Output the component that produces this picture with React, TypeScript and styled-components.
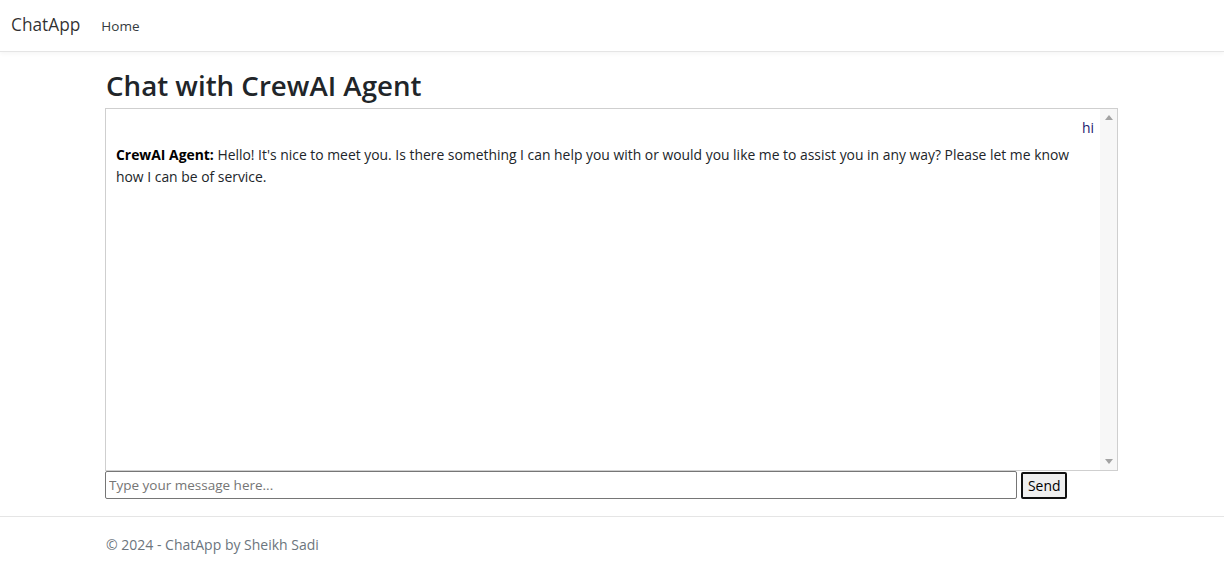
import React from "react";
import styled, { createGlobalStyle } from "styled-components";

const Global = createGlobalStyle`
  html, body { margin: 0; padding: 0; background: #fff; }
  body {
    font-family: "Open Sans", "Noto Sans", "Liberation Sans", sans-serif;
    color: #212529;
    font-size: 14px;
  }
  * { box-sizing: border-box; }
`;

const Page = styled.div`
  display: flex;
  flex-direction: column;
  min-height: 571px;
`;

const NavBar = styled.header`
  height: 52px;
  display: flex;
  align-items: center;
  gap: 21px;
  padding: 0 11px;
  border-bottom: 1px solid #e5e5e5;
  box-shadow: 0 2px 4px rgba(0, 0, 0, 0.04);
`;

const Brand = styled.a`
  font-size: 17.3px;
  color: rgba(0, 0, 0, 0.82);
  text-decoration: none;
  padding-bottom: 2px;
`;

const NavLink = styled.a`
  font-size: 13.5px;
  color: #343a40;
  text-decoration: none;
`;

const Main = styled.main`
  padding: 14px 106px 0 105px;
  flex: 0 0 auto;
`;

const Title = styled.h2`
  margin: 0 0 4px 1px;
  font-size: 27.7px;
  font-weight: 600;
  line-height: 38px;
  color: #212529;
`;

const ChatBox = styled.div`
  display: flex;
  height: 363px;
  border: 1px solid #cfcfcf;
`;

const Messages = styled.div`
  flex: 1;
  padding: 8px 6px 0 10px;
  display: flex;
  flex-direction: column;
`;

const Message = styled.p<{ $mine?: boolean }>`
  margin: 0 0 5px;
  font-size: 13.9px;
  line-height: 22px;
  text-align: ${(p) => (p.$mine ? "right" : "left")};
  color: ${(p) => (p.$mine ? "#1a1a6e" : "#212529")};
  padding-right: ${(p) => (p.$mine ? "0" : "20px")};
`;

const Sender = styled.strong`
  font-weight: 700;
  color: #000;
`;

const Scrollbar = styled.div`
  width: 17px;
  background: #f7f7f7;
  display: flex;
  flex-direction: column;
  justify-content: space-between;
  align-items: center;
  padding: 6px 0 6px;
`;

const Arrow = styled.span<{ $down?: boolean }>`
  width: 0;
  height: 0;
  border-left: 4px solid transparent;
  border-right: 4px solid transparent;
  ${(p) =>
    p.$down
      ? "border-top: 5px solid #a3a3a3;"
      : "border-bottom: 5px solid #a3a3a3;"}
`;

const InputRow = styled.form`
  display: flex;
  gap: 4px;
  align-items: center;
  padding-right: 50px;
`;

const TextInput = styled.input`
  width: 912px;
  height: 28px;
  border: 1px solid #767676;
  border-radius: 2px;
  padding: 1px 3px;
  font-family: inherit;
  font-size: 13.5px;
  color: #212529;
  &::placeholder { color: #757575; }
`;

const SendButton = styled.button`
  height: 27px;
  padding: 0 5px;
  border: 2px solid #101010;
  border-radius: 2px;
  background: #efefef;
  font-family: inherit;
  font-size: 13.9px;
  color: #000;
`;

const Footer = styled.footer`
  margin-top: 17px;
  border-top: 1px solid #e5e5e5;
  padding: 17px 106px 0;
  font-size: 14px;
  line-height: 22px;
  color: #6c757d;
`;

export default function App() {
  return (
    <>
      <Global />
      <Page>
        <NavBar>
          <Brand href="#">ChatApp</Brand>
          <NavLink href="#">Home</NavLink>
        </NavBar>
        <Main>
          <Title>Chat with CrewAI Agent</Title>
          <ChatBox>
            <Messages>
              <Message $mine>hi</Message>
              <Message>
                <Sender>CrewAI Agent:</Sender> Hello! It's nice to meet you. Is
                there something I can help you with or would you like me to
                assist you in any way? Please let me know how I can be of
                service.
              </Message>
            </Messages>
            <Scrollbar>
              <Arrow />
              <Arrow $down />
            </Scrollbar>
          </ChatBox>
          <InputRow onSubmit={(e) => e.preventDefault()}>
            <TextInput placeholder="Type your message here..." />
            <SendButton type="submit">Send</SendButton>
          </InputRow>
        </Main>
        <Footer>© 2024 - ChatApp by Sheikh Sadi</Footer>
      </Page>
    </>
  );
}
